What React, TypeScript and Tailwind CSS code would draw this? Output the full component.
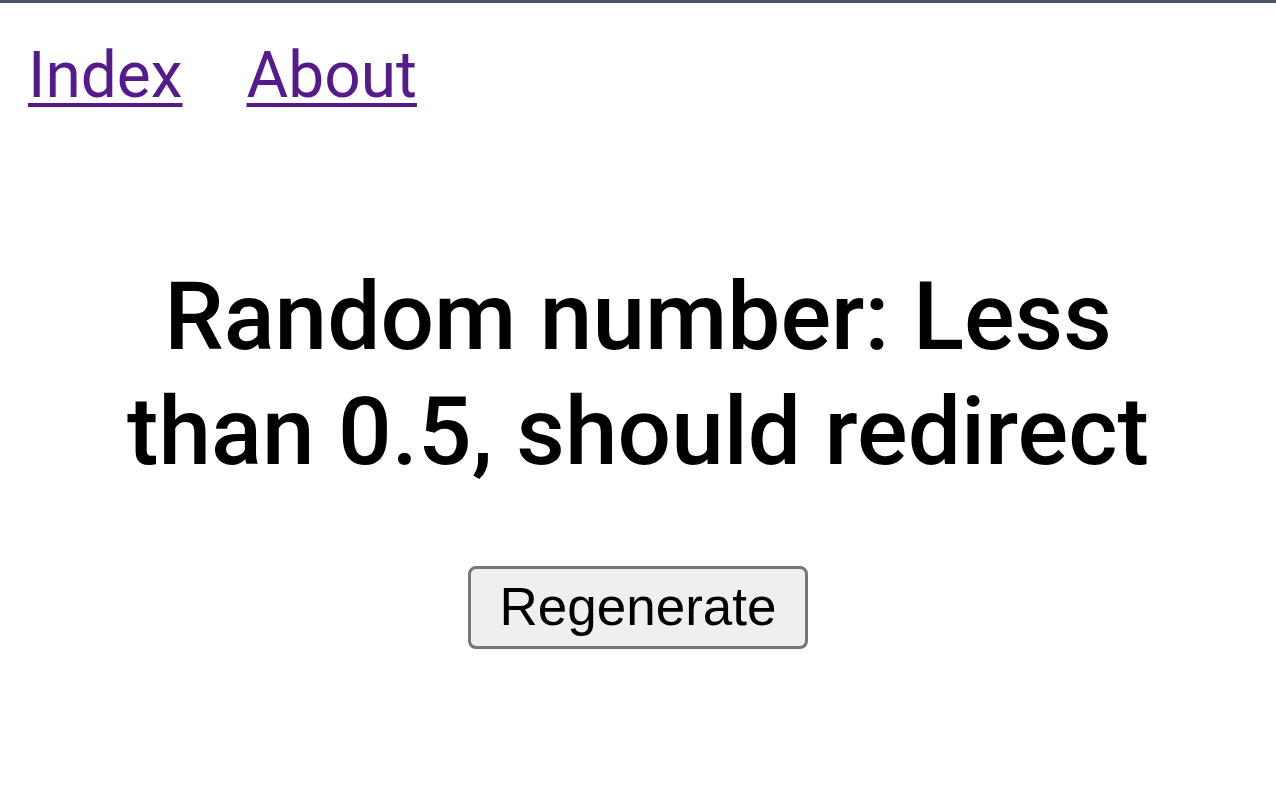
export default function App() {
  return (
    <div className="min-h-screen border-t-[3px] border-[#4b5563] bg-white font-['Roboto',sans-serif]">
      <nav className="flex gap-x-[64px] px-[28px] pt-[36px]">
        <a href="#" className="text-[64px] leading-[1.15] text-[#551a8b] underline decoration-[4px] underline-offset-[6px]">
          Index
        </a>
        <a href="#" className="text-[64px] leading-[1.15] text-[#551a8b] underline decoration-[4px] underline-offset-[6px]">
          About
        </a>
      </nav>

      <main className="flex flex-col items-center pt-[146px]">
        <h1 className="max-w-[1120px] text-center text-[94.5px] font-medium leading-[115px] text-black">
          Random number: Less than 0.5, should redirect
        </h1>
        <button className="mt-[77px] rounded-[8px] border-[3px] border-[#767676] bg-[#efefef] px-[29px] py-[8px] font-['Liberation_Sans',Arial,sans-serif] text-[53px] leading-[1.15] text-black">
          Regenerate
        </button>
      </main>
    </div>
  );
}
